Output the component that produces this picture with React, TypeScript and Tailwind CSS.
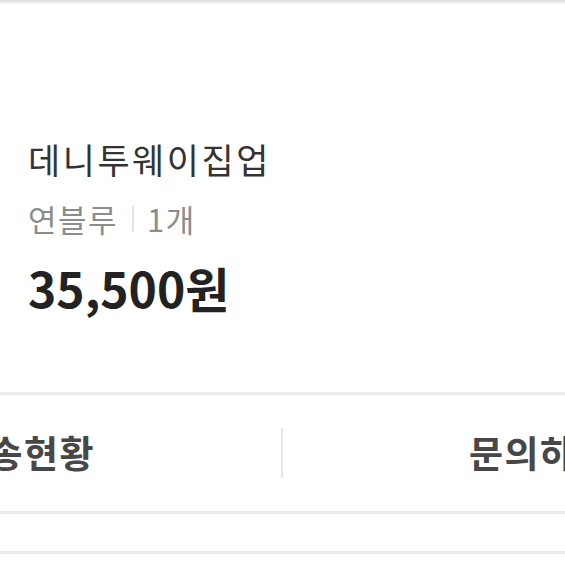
export default function App() {
  const font = { fontFamily: '"Noto Sans CJK KR", "Noto Sans", sans-serif' };
  return (
    <div className="w-[565px] h-[565px] overflow-hidden bg-white" style={font}>
      {/* top divider */}
      <div className="h-[2px] bg-[#e2e2e2]" />
      <div className="h-[2px] bg-[#f4f4f4]" />

      {/* product info */}
      <div className="h-[388px] pl-[28px] pt-[133px]">
        <p className="text-[35px] leading-[44px] tracking-[2.5px] text-[#333333]">데니투웨이집업</p>
        <div className="mt-[18px] flex items-center text-[31px] leading-[40px] tracking-[1.5px] text-[#8c8c8c]">
          <span>연블루</span>
          <span className="ml-[14px] mr-[13px] w-[2px] h-[26px] bg-[#e4e4e4]" />
          <span>1개</span>
        </div>
        <p className="mt-[20px] text-[48px] leading-[56px] font-bold text-[#222222]">35,500원</p>
      </div>

      <div className="h-[3px] bg-[#ebebeb]" />

      {/* action buttons */}
      <div className="-ml-[233px] w-[1030px] h-[116px] flex items-center">
        <div className="flex-1 text-center text-[37px] tracking-[1.5px] font-bold text-[#474747]">배송현황</div>
        <div className="w-[2px] h-[50px] bg-[#e6e6e6]" />
        <div className="flex-1 text-center text-[37px] tracking-[1.5px] font-bold text-[#474747]">문의하기</div>
      </div>

      <div className="h-[3px] bg-[#ebebeb]" />
      <div className="h-[37px]" />
      <div className="h-[3px] bg-[#ebebeb]" />
    </div>
  );
}
